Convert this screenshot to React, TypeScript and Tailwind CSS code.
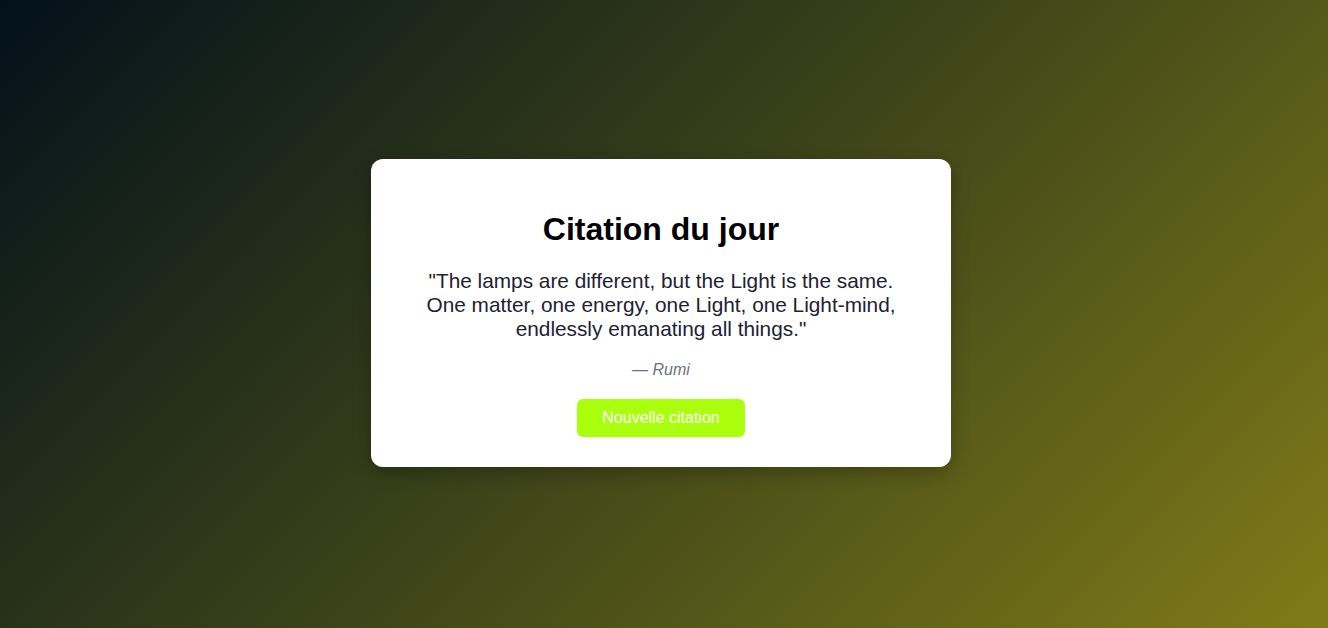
export default function App() {
  return (
    <div
      className="w-full h-[628px] flex items-center justify-center pr-[6px] pb-[2px] bg-[linear-gradient(135deg,#02111b_0%,#3d4419_50%,#807b18_100%)]"
      style={{ fontFamily: '"Liberation Sans", Arial, sans-serif' }}
    >
      <div className="w-[580px] bg-white rounded-xl px-10 pt-[52px] pb-[30px] text-center shadow-[0_6px_18px_rgba(0,0,0,0.25)]">
        <h1 className="text-[32px] leading-[36.8px] font-bold text-black mb-[21px]">
          Citation du jour
        </h1>
        <p className="text-[20.8px] leading-[23.9px] text-[#1d2233] mb-[20px]">
          "The lamps are different, but the Light is the same. One matter, one energy, one Light, one Light-mind, endlessly emanating all things."
        </p>
        <p className="text-base leading-[18.4px] italic text-[#6b7280] mb-[20px]">— Rumi</p>
        <button className="bg-[#aaff0c] text-white text-base leading-[18px] px-[25px] py-[10px] rounded-md">
          Nouvelle citation
        </button>
      </div>
    </div>
  );
}
